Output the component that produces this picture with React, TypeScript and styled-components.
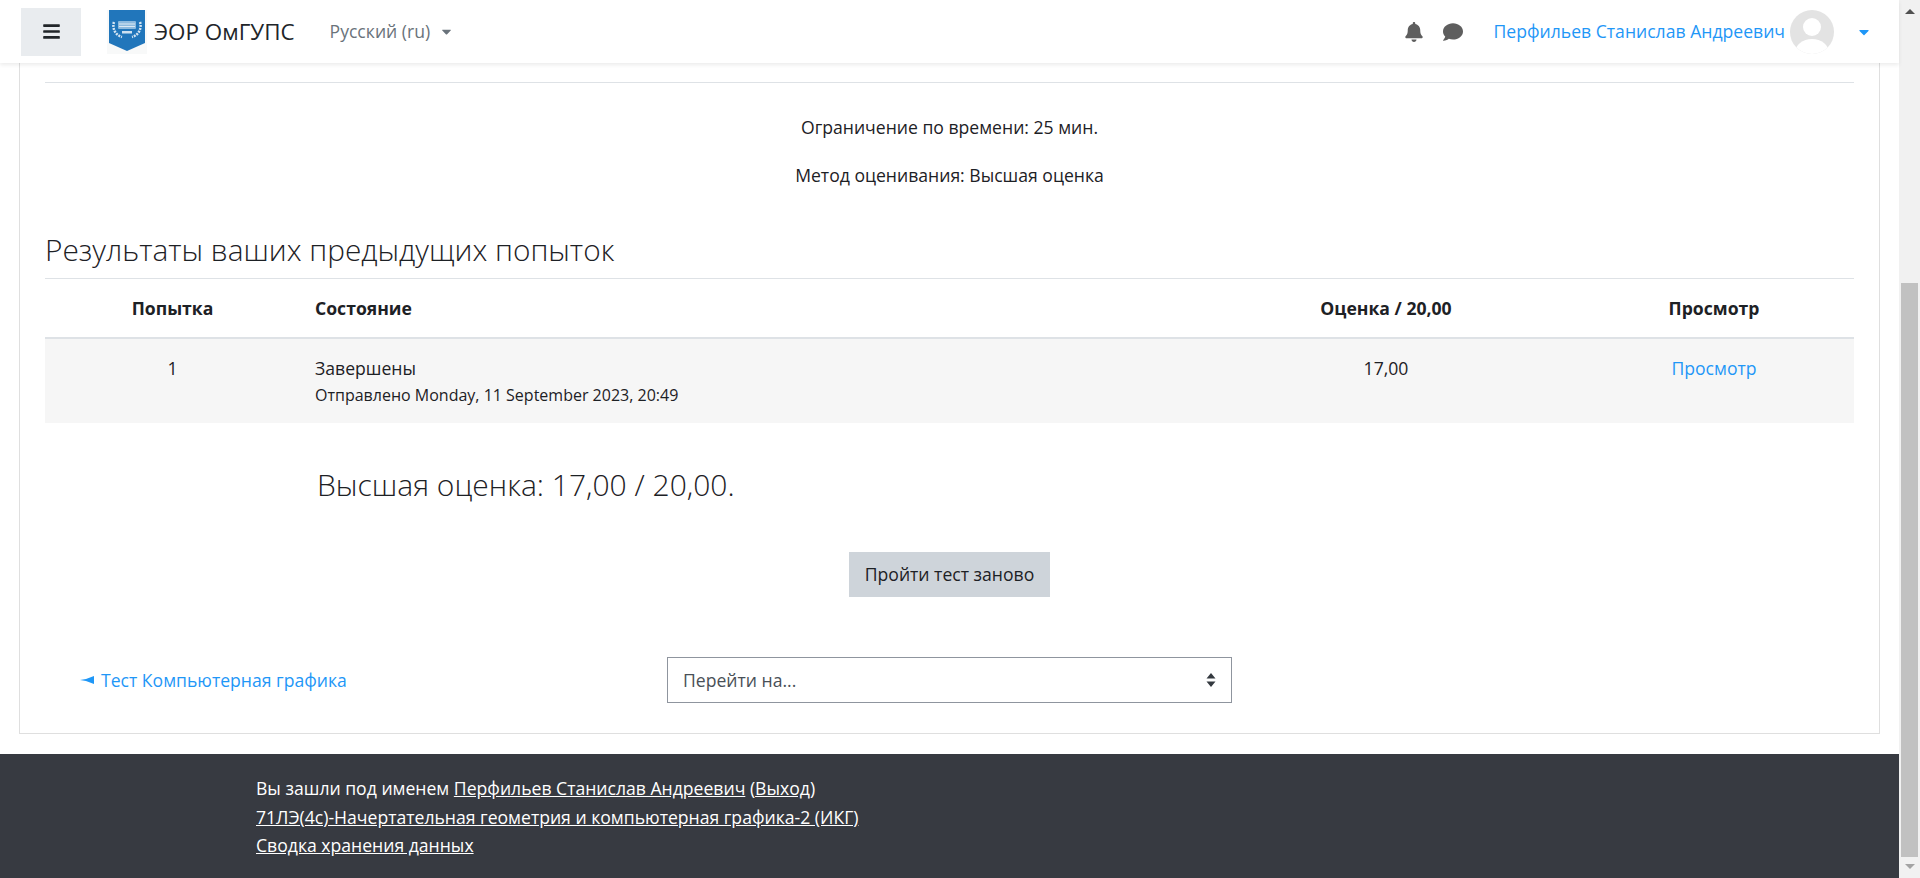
import { createGlobalStyle } from 'styled-components';
import styled from 'styled-components';
import { FaBars, FaBell, FaComment, FaCaretDown } from 'react-icons/fa';

const GlobalStyle = createGlobalStyle`
    html, body {
        margin: 0;
        padding: 0;
        height: 100%;
        overflow: hidden;
        background: #fff;
    }
    body {
        font-family: "Open Sans", "Noto Sans", "Liberation Sans", sans-serif;
        font-size: 17.6px;
        line-height: 1.5;
        color: #1d2125;
    }
    * { box-sizing: border-box; }
`;

const LINK = '#1f97f7';

const Page = styled.div`
    display: flex;
    width: 1920px;
    height: 878px;
    overflow: hidden;
`;
const Main = styled.div`
    flex: 1;
    min-width: 0;
    display: flex;
    flex-direction: column;
    position: relative;
`;
const Navbar = styled.header`
    height: 63px;
    flex: none;
    display: flex;
    align-items: center;
    background: #fff;
    padding-left: 21px;
    padding-right: 27px;
    box-shadow: 0 2px 4px rgba(0, 0, 0, 0.08);
    position: relative;
    z-index: 2;
`;
const MenuButton = styled.button`
    width: 60px;
    height: 48px;
    border: none;
    background: #e9ecef;
    color: #212529;
    display: flex;
    align-items: center;
    justify-content: center;
    font-size: 19px;
    padding: 0;
`;
const Brand = styled.a`
    display: flex;
    align-items: center;
    margin-left: 26px;
    color: #212529;
    font-size: 22.4px;
    gap: 7px;
`;
const LangMenu = styled.div`
    display: flex;
    align-items: center;
    margin-left: 35px;
    color: #6a737b;
    font-size: 17.6px;
    gap: 9px;
`;
const Spacer = styled.div`
    flex: 1;
`;
const NavIcon = styled.span`
    color: #5e5e5e;
    display: flex;
    font-size: 20px;
    margin-right: 19px;
`;
const UserName = styled.a`
    color: ${LINK};
    font-size: 17.6px;
    margin-left: 12px;
`;
const Avatar = styled.svg`
    width: 44px;
    height: 44px;
    margin-left: 5px;
`;
const UserCaret = styled.span`
    color: ${LINK};
    display: flex;
    font-size: 16px;
    margin-left: 22px;
`;
const Content = styled.div`
    flex: 1;
    padding: 0 19px 20px 19px;
    display: flex;
    min-height: 0;
`;
const Card = styled.section`
    flex: 1;
    border: 1px solid #dfdfdf;
    border-top: none;
    padding: 19px 25px 0 25px;
    display: flex;
    flex-direction: column;
`;
const Divider = styled.hr`
    margin: 0;
    border: none;
    border-top: 1px solid #dee2e6;
`;
const Note = styled.p<{ $top: number }>`
    margin: ${p => p.$top}px 0 0;
    text-align: center;
    line-height: 24px;
`;
const SectionTitle = styled.h3`
    margin: 42px 0 0;
    font-weight: 300;
    font-size: 29.8px;
    line-height: 42px;
    padding-bottom: 7px;
    border-bottom: 1px solid #dee2e6;
    color: #1d2125;
`;
const Table = styled.table`
    width: 100%;
    border-collapse: collapse;
    table-layout: fixed;
`;
const Head = styled.th<{ $width?: number; $left?: boolean }>`
    width: ${p => (p.$width ? `${p.$width}px` : 'auto')};
    text-align: ${p => (p.$left ? 'left' : 'center')};
    font-weight: 700;
    height: 59px;
    padding: 0 ${p => (p.$left ? 15 : 12)}px;
    border-bottom: 2px solid #dee2e6;
`;
const Row = styled.tr`
    background: #f6f6f6;
`;
const Cell = styled.td<{ $left?: boolean }>`
    text-align: ${p => (p.$left ? 'left' : 'center')};
    vertical-align: top;
    padding: 16px ${p => (p.$left ? 15 : 12)}px 0;
    height: 85px;
`;
const Submitted = styled.div`
    font-size: 16px;
    line-height: 24px;
    margin-top: 2px;
`;
const TableLink = styled.a`
    color: ${LINK};
`;
const BestGrade = styled.h3`
    margin: 38px 0 0 272px;
    font-weight: 300;
    font-size: 30px;
    line-height: 48px;
`;
const AgainRow = styled.div`
    display: flex;
    justify-content: center;
    margin-top: 43px;
`;
const AgainButton = styled.button`
    width: 201px;
    height: 45px;
    border: none;
    background: #ced4da;
    color: #1d2125;
    font: inherit;
    padding: 0;
`;
const Activity = styled.div`
    display: flex;
    align-items: center;
    margin-top: 60px;
`;
const BackLink = styled.a`
    color: ${LINK};
    margin-left: 35px;
    width: 587px;
    display: flex;
    align-items: center;
    gap: 7px;
`;
const JumpSelect = styled.div`
    width: 565px;
    height: 46px;
    border: 1px solid #8f959e;
    display: flex;
    align-items: center;
    justify-content: space-between;
    padding: 0 15px 0 15px;
    color: #495057;
`;
const Footer = styled.footer`
    height: 124px;
    flex: none;
    background: #373a41;
    color: #fff;
    padding: 20px 0 0 256px;
    line-height: 28.5px;
`;
const FooterLink = styled.a`
    color: #fff;
    text-decoration: underline;
`;
const ScrollBar = styled.div`
    width: 21px;
    flex: none;
    background: #f1f1f1;
    display: flex;
    flex-direction: column;
    align-items: center;
`;
const ScrollArrow = styled.div<{ $up?: boolean }>`
    width: 0;
    height: 0;
    flex: none;
    margin: ${p => (p.$up ? '9px 0 0' : '7px 0 0')};
    border-left: 5px solid transparent;
    border-right: 5px solid transparent;
    border-bottom: ${p => (p.$up ? '5px solid #505050' : 'none')};
    border-top: ${p => (p.$up ? 'none' : '5px solid #a3a3a3')};
`;
const ScrollThumb = styled.div`
    width: 17px;
    flex: none;
    height: 574px;
    margin-top: 269px;
    background: #c1c1c1;
`;

const Logo = () => (
    <svg width="40" height="44" viewBox="0 0 40 44">
        <rect width="40" height="44" fill="#f8f9f9" />
        <path d="M2 0h36v33L20 41 2 33z" fill="#2176bb" />
        <path d="M7 12c-2 6 1 13 8 15M33 12c2 6-1 13-8 15" fill="none" stroke="#d5e5f2" strokeWidth="2.5" strokeDasharray="2 1" />
        <rect x="11" y="11" width="18" height="8" rx="1" fill="#8dbade" />
        <path d="M12 14h16M12 16.5h16" stroke="#dbe9f4" strokeWidth="1" />
        <rect x="15" y="21" width="10" height="2.5" fill="#cfe1f0" />
    </svg>
);

export default function App() {
    return (
        <Page>
            <GlobalStyle />
            <Main>
                <Navbar>
                    <MenuButton><FaBars /></MenuButton>
                    <Brand><Logo />ЭОР ОмГУПС</Brand>
                    <LangMenu>Русский ‎(ru)‎ <FaCaretDown size={15} /></LangMenu>
                    <Spacer />
                    <NavIcon><FaBell /></NavIcon>
                    <NavIcon><FaComment /></NavIcon>
                    <UserName>Перфильев Станислав Андреевич</UserName>
                    <Avatar viewBox="0 0 44 44">
                        <defs>
                            <clipPath id="avatarClip"><circle cx="22" cy="22" r="22" /></clipPath>
                        </defs>
                        <circle cx="22" cy="22" r="22" fill="#e3e3e3" />
                        <g clipPath="url(#avatarClip)" fill="#fff">
                            <circle cx="22" cy="17" r="9" />
                            <ellipse cx="22" cy="43" rx="17" ry="14" />
                        </g>
                    </Avatar>
                    <UserCaret><FaCaretDown /></UserCaret>
                </Navbar>
                <Content>
                    <Card>
                        <Divider />
                        <Note $top={32}>Ограничение по времени: 25 мин.</Note>
                        <Note $top={24}>Метод оценивания: Высшая оценка</Note>
                        <SectionTitle>Результаты ваших предыдущих попыток</SectionTitle>
                        <Table>
                            <thead>
                                <tr>
                                    <Head $width={255}>Попытка</Head>
                                    <Head $left>Состояние</Head>
                                    <Head $width={376}>Оценка / 20,00</Head>
                                    <Head $width={280}>Просмотр</Head>
                                </tr>
                            </thead>
                            <tbody>
                                <Row>
                                    <Cell>1</Cell>
                                    <Cell $left>
                                        Завершены
                                        <Submitted>Отправлено Monday, 11 September 2023, 20:49</Submitted>
                                    </Cell>
                                    <Cell>17,00</Cell>
                                    <Cell><TableLink>Просмотр</TableLink></Cell>
                                </Row>
                            </tbody>
                        </Table>
                        <BestGrade>Высшая оценка: 17,00 / 20,00.</BestGrade>
                        <AgainRow><AgainButton>Пройти тест заново</AgainButton></AgainRow>
                        <Activity>
                            <BackLink>
                                <svg width="14" height="8" viewBox="0 0 14 8">
                                    <path d="M0 4l6-1 8-3v8L6 5z" fill={LINK} />
                                </svg>
                                Тест Компьютерная графика
                            </BackLink>
                            <JumpSelect>
                                Перейти на...
                                <svg width="10" height="14" viewBox="0 0 10 14">
                                    <path d="M5 0l4.5 5.5h-9zM5 14L.5 8.5h9z" fill="#343a40" />
                                </svg>
                            </JumpSelect>
                        </Activity>
                    </Card>
                </Content>
                <Footer>
                    <div>Вы зашли под именем <FooterLink>Перфильев Станислав Андреевич</FooterLink> (<FooterLink>Выход</FooterLink>)</div>
                    <div><FooterLink>71ЛЭ(4с)-Начертательная геометрия и компьютерная графика-2 (ИКГ)</FooterLink></div>
                    <div><FooterLink>Сводка хранения данных</FooterLink></div>
                </Footer>
            </Main>
            <ScrollBar>
                <ScrollArrow $up />
                <ScrollThumb />
                <ScrollArrow />
            </ScrollBar>
        </Page>
    );
}
